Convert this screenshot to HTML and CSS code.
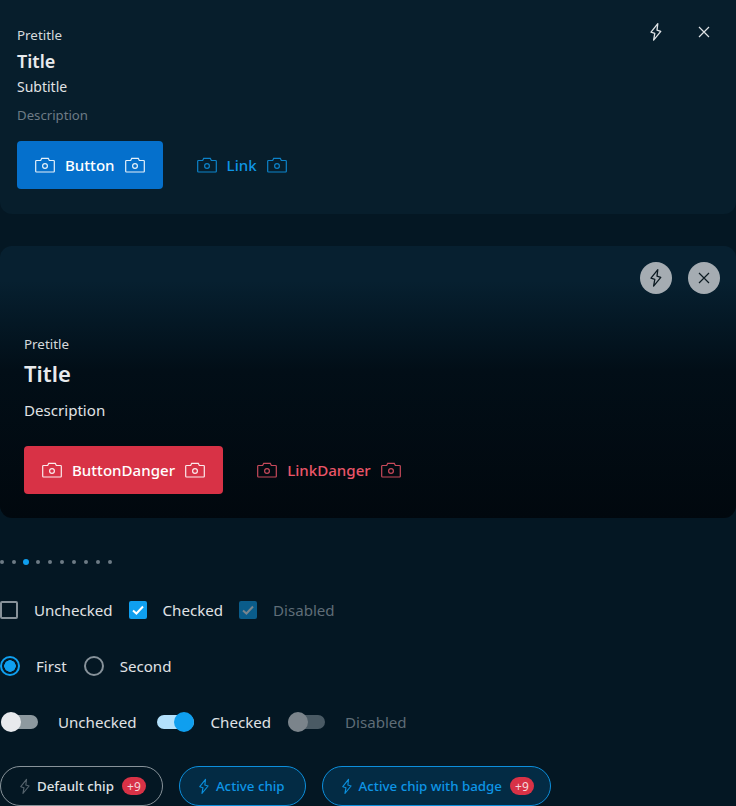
FILE: index.html
```html
<!DOCTYPE html>
<html lang="en">
<head>
    <meta charset="UTF-8">
    <title>Components</title>
    <link rel="stylesheet" href="styles.css">
</head>
<body>
    <svg class="sprite" width="0" height="0">
        <symbol id="camera" viewBox="0 0 20 16">
            <path d="M1.5 3.5h4.2l1-2.2h6.6l1 2.2h4.2a.8.8 0 0 1 .8.8v9.9a.8.8 0 0 1-.8.8H1.5a.8.8 0 0 1-.8-.8V4.3a.8.8 0 0 1 .8-.8z" fill="none" stroke="currentColor" stroke-width="1.2"/>
            <circle cx="10" cy="9" r="2.4" fill="none" stroke="currentColor" stroke-width="1.2"/>
        </symbol>
        <symbol id="bolt" viewBox="0 0 16 20">
            <path d="M9.8 1.6 3 10.2l3.8 1.2-1.2 6.8 7.2-8.8-3.8-1.2 .8-6.6z" fill="none" stroke="currentColor" stroke-width="1.3" stroke-linejoin="round"/>
        </symbol>
        <symbol id="close" viewBox="0 0 12 12">
            <path d="M1 1l10 10M11 1 1 11" fill="none" stroke="currentColor" stroke-width="1.2"/>
        </symbol>
    </svg>

    <section class="card card-plain">
        <div class="card-actions">
            <button class="icon-btn"><svg class="ico-bolt"><use href="#bolt"/></svg></button>
            <button class="icon-btn"><svg class="ico-close"><use href="#close"/></svg></button>
        </div>
        <div class="pretitle">Pretitle</div>
        <div class="title">Title</div>
        <div class="subtitle">Subtitle</div>
        <div class="description">Description</div>
        <div class="actions">
            <a class="btn btn-primary"><svg class="ico-cam"><use href="#camera"/></svg>Button<svg class="ico-cam"><use href="#camera"/></svg></a>
            <a class="link link-primary"><svg class="ico-cam"><use href="#camera"/></svg>Link<svg class="ico-cam"><use href="#camera"/></svg></a>
        </div>
    </section>

    <section class="card card-hero">
        <div class="card-actions">
            <button class="icon-btn round"><svg class="ico-bolt"><use href="#bolt"/></svg></button>
            <button class="icon-btn round"><svg class="ico-close"><use href="#close"/></svg></button>
        </div>
        <div class="pretitle">Pretitle</div>
        <div class="title">Title</div>
        <div class="description">Description</div>
        <div class="actions">
            <a class="btn btn-danger"><svg class="ico-cam"><use href="#camera"/></svg>ButtonDanger<svg class="ico-cam"><use href="#camera"/></svg></a>
            <a class="link link-danger"><svg class="ico-cam"><use href="#camera"/></svg>LinkDanger<svg class="ico-cam"><use href="#camera"/></svg></a>
        </div>
    </section>

    <div class="dots">
        <i></i><i></i><i class="on"></i><i></i><i></i><i></i><i></i><i></i><i></i><i></i>
    </div>

    <div class="row row-check">
        <span class="check"></span><label>Unchecked</label>
        <span class="check on"><svg viewBox="0 0 18 18"><path d="M4 9.5l3.4 3L14 5.5" fill="none" stroke="currentColor" stroke-width="2"/></svg></span><label>Checked</label>
        <span class="check on disabled"><svg viewBox="0 0 18 18"><path d="M4 9.5l3.4 3L14 5.5" fill="none" stroke="currentColor" stroke-width="2"/></svg></span><label class="off">Disabled</label>
    </div>

    <div class="row row-radio">
        <span class="radio on"></span><label>First</label>
        <span class="radio"></span><label>Second</label>
    </div>

    <div class="row row-toggle">
        <span class="toggle"></span><label>Unchecked</label>
        <span class="toggle on"></span><label>Checked</label>
        <span class="toggle disabled"></span><label class="off">Disabled</label>
    </div>

    <div class="chips">
        <div class="chip"><svg class="ico-chip"><use href="#bolt"/></svg>Default chip<span class="badge">+9</span></div>
        <div class="chip active no-badge"><svg class="ico-chip"><use href="#bolt"/></svg>Active chip</div>
        <div class="chip active"><svg class="ico-chip"><use href="#bolt"/></svg>Active chip with badge<span class="badge">+9</span></div>
    </div>
</body>
</html>
```

FILE: styles.css
```css
body {
    margin: 0;
    height: 806px;
    overflow: hidden;
    font-family: "Noto Sans", sans-serif;
    font-size: 15.1px;
    color: #e8eaed;
    background-color: #041723;
}

.sprite {
    display: block;
}

.card {
    position: relative;
    box-sizing: border-box;
}

.card-plain {
    height: 214px;
    padding: 24px 17px 0;
    background-color: #071e2c;
    border-radius: 0 0 12px 12px;
}

.card-hero {
    height: 272px;
    margin-top: 32px;
    padding: 88px 24px 0;
    background: linear-gradient(#072030 0, #072030 35px, #041825 75px, #020e17 125px, #01080e 100%);
    border-radius: 12px;
}

.card-actions {
    position: absolute;
    top: 16px;
    right: 16px;
    display: flex;
    gap: 16px;
}

.icon-btn {
    display: flex;
    align-items: center;
    justify-content: center;
    width: 32px;
    height: 32px;
    padding: 0;
    border: none;
    border-radius: 50%;
    background: none;
    color: #dfe3e6;
}

.icon-btn.round {
    background-color: #a5acb2;
    color: #0c1a22;
}

.ico-bolt {
    width: 16px;
    height: 20px;
}

.ico-close {
    width: 12px;
    height: 12px;
}

.ico-cam {
    width: 20px;
    height: 16px;
}

.ico-chip {
    width: 14px;
    height: 17px;
    margin-right: 5px;
}

.pretitle {
    font-size: 13.4px;
    line-height: 22px;
    color: #d5d9dc;
}

.title {
    font-size: 18px;
    font-weight: 600;
    line-height: 30px;
}

.subtitle {
    font-size: 14px;
    line-height: 22px;
    color: #e0e3e6;
}

.description {
    font-size: 13.2px;
    line-height: 34px;
    color: #6d7b85;
}

.actions {
    display: flex;
    align-items: center;
    gap: 34px;
    margin-top: 9px;
}

.btn,
.link {
    display: flex;
    align-items: center;
    gap: 10px;
    height: 48px;
    font-weight: 500;
}

.btn {
    padding: 0 18px;
    border-radius: 4px;
    color: #fff;
}

.btn .ico-cam {
    opacity: 0.9;
}

.btn-primary {
    background-color: #0570cc;
}

.btn-danger {
    background-color: #d83246;
}

.link-primary {
    color: #0e95e6;
}

.link-danger {
    color: #ea5568;
}

.link .ico-cam {
    opacity: 0.85;
}

/* hero text is a bit bigger */
.card-hero .pretitle {
    line-height: 20px;
}

.card-hero .title {
    font-size: 22px;
    line-height: 38px;
}

.card-hero .description {
    font-size: 15.1px;
    line-height: 36px;
    color: #e0e3e6;
}

.card-hero .actions {
    margin-top: 18px;
}

.dots {
    display: flex;
    align-items: center;
    gap: 8px;
    height: 12px;
    margin-top: 38px;
}

.dots i {
    width: 4px;
    height: 4px;
    border-radius: 50%;
    background-color: #6d7b85;
}

.dots i.on {
    width: 6px;
    height: 6px;
    margin: 0 -1px;
    background-color: #0f9fef;
}

.row {
    display: flex;
    align-items: center;
    height: 24px;
}

.row label {
    color: #e0e3e6;
}

.row label.off {
    color: #5f6d77;
}

.row-check {
    margin-top: 30px;
}

.row-check label {
    margin: 0 16px;
}

.check {
    box-sizing: border-box;
    width: 18px;
    height: 18px;
    border: 2px solid #87929a;
    border-radius: 2px;
}

.check.on {
    border: none;
    background-color: #0f9fef;
    color: #fff;
}

.check.disabled {
    background-color: #0a5c8a;
    color: #78858e;
}

.check svg {
    display: block;
}

.row-radio {
    margin-top: 32px;
}

.row-radio label {
    margin: 0 17px 0 16px;
}

.radio {
    box-sizing: border-box;
    width: 20px;
    height: 20px;
    border: 2px solid #87929a;
    border-radius: 50%;
}

.radio.on {
    border-color: #0f9fef;
    background: radial-gradient(circle, #0f9fef 0 5.5px, transparent 6px);
}

.row-toggle {
    margin-top: 32px;
}

.row-toggle label {
    margin: 0 19px 0 20px;
}

.row-toggle .toggle.on + label {
    margin: 0 16px 0 17px;
}

.toggle {
    position: relative;
    width: 37px;
    height: 14px;
    margin-left: 1px;
    border-radius: 7px;
    background-color: #8d999f;
}

.toggle::after {
    content: "";
    position: absolute;
    top: -3px;
    left: 0;
    width: 20px;
    height: 20px;
    border-radius: 50%;
    background-color: #e8eaed;
}

.toggle.on {
    background-color: #b3e1fc;
}

.toggle.on::after {
    left: 17px;
    background-color: #0f9fef;
}

.toggle.disabled {
    background-color: #4a5a64;
}

.toggle.disabled::after {
    background-color: #7b848b;
}

.chips {
    display: flex;
    gap: 16px;
    margin-top: 32px;
}

.chip {
    box-sizing: border-box;
    display: flex;
    align-items: center;
    height: 40px;
    padding: 0 16px 0 17px;
    border: 1px solid #88939a;
    border-radius: 20px;
    font-size: 13.3px;
    font-weight: 500;
    color: #dfe3e6;
}

.chip .ico-chip {
    color: #55636d;
}

.chip.active {
    border-color: #0d8fdc;
    background-color: #032b44;
    color: #0e95e6;
}

.chip.active .ico-chip {
    color: #0a8fdc;
}

.chip.no-badge {
    padding-right: 20px;
}

.badge {
    display: flex;
    align-items: center;
    justify-content: center;
    width: 24px;
    height: 18px;
    margin-left: 8px;
    border-radius: 9px;
    background-color: #d83246;
    color: #f4d8dc;
    font-size: 12px;
    font-weight: 400;
}
```
